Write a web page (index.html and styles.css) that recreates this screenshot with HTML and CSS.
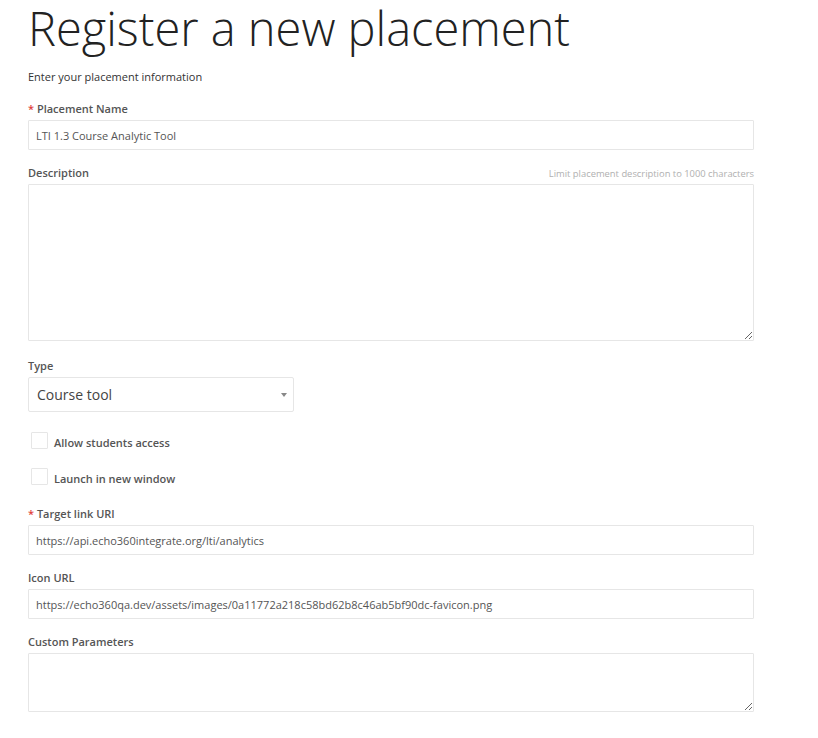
FILE: index.html
```html
<!DOCTYPE html>
<html>
<head>
<meta charset="utf-8">
<link rel="stylesheet" href="styles.css">
</head>
<body>
<div class="page">
  <h1 class="title">Register a new placement</h1>
  <p class="intro">Enter your placement information</p>

  <div class="field">
    <label class="label"><span class="req">*</span> Placement Name</label>
    <input class="input" type="text" value="LTI 1.3 Course Analytic Tool">
  </div>

  <div class="field tight">
    <div class="label-row">
      <label class="label">Description</label>
      <span class="hint">Limit placement description to 1000 characters</span>
    </div>
    <textarea class="textarea tall"></textarea>
  </div>

  <div class="field type-field">
    <label class="label">Type</label>
    <div class="select">
      <span class="select-text">Course tool</span>
      <span class="caret"></span>
    </div>
  </div>

  <div class="check-row first">
    <span class="box"></span>
    <span class="check-label">Allow students access</span>
  </div>
  <div class="check-row">
    <span class="box"></span>
    <span class="check-label">Launch in new window</span>
  </div>

  <div class="field target">
    <label class="label"><span class="req">*</span> Target link URI</label>
    <input class="input" type="text" value="https://api.echo360integrate.org/lti/analytics">
  </div>

  <div class="field tight">
    <label class="label">Icon URL</label>
    <input class="input" type="text" value="https://echo360qa.dev/assets/images/0a11772a218c58bd62b8c46ab5bf90dc-favicon.png">
  </div>

  <div class="field tight">
    <label class="label">Custom Parameters</label>
    <textarea class="textarea short"></textarea>
  </div>
</div>
</body>
</html>
```

FILE: styles.css
```css
* { box-sizing: border-box; }
html, body { margin: 0; padding: 0; background: #fff; }
body {
  font-family: "Open Sans", "Liberation Sans", sans-serif;
  color: #333;
}
.page {
  width: 754px;
  padding-left: 28px;
  padding-top: 1px;
}
.title {
  margin: 0;
  font-weight: 300;
  font-size: 47px;
  line-height: 54px;
  color: #222;
}
.intro {
  margin: 14px 0 0;
  font-size: 11px;
  line-height: 16px;
  color: #333;
}
.field {
  display: flex;
  flex-direction: column;
  margin-top: 16px;
}
.field.tight { margin-top: 15px; }
.label {
  font-size: 11px;
  line-height: 16px;
  font-weight: 600;
  color: #555;
  margin-bottom: 3px;
}
.req { color: #e0413b; }
.label-row {
  display: flex;
  justify-content: space-between;
  align-items: baseline;
}
.hint {
  font-size: 9.4px;
  color: #b0b0b0;
}
.input {
  width: 726px;
  height: 30px;
  border: 1px solid #e6e6e6;
  border-radius: 1px;
  padding: 0 7px;
  font-family: "Open Sans", "Liberation Sans", sans-serif;
  font-size: 11px;
  color: #555;
  background: #fff;
  outline: none;
}
.textarea {
  width: 726px;
  border: 1px solid #e6e6e6;
  border-radius: 1px;
  font-family: "Open Sans", "Liberation Sans", sans-serif;
  background: #fff;
  outline: none;
  display: block;
}
.textarea.tall { height: 157px; }
.textarea.short { height: 59px; }
.type-field { margin-top: 17px; }
.select {
  position: relative;
  width: 266px;
  height: 35px;
  border: 1px solid #e6e6e6;
  border-radius: 2px;
  display: flex;
  align-items: center;
  padding-left: 8px;
}
.select-text {
  font-size: 14px;
  color: #444;
}
.caret {
  position: absolute;
  right: 6px;
  top: 15px;
  width: 0;
  height: 0;
  border-left: 3px solid transparent;
  border-right: 3px solid transparent;
  border-top: 4px solid #888;
}
.check-row {
  display: flex;
  align-items: center;
  margin-top: 19px;
  padding-left: 3px;
  height: 17px;
}
.check-row.first { margin-top: 20px; }
.box {
  width: 17px;
  height: 17px;
  border: 1px solid #e6e6e6;
  border-radius: 1px;
  margin-right: 6px;
}
.check-label {
  font-size: 11px;
  font-weight: 600;
  color: #555;
  padding-top: 3px;
}
.target { margin-top: 21px; }
```
